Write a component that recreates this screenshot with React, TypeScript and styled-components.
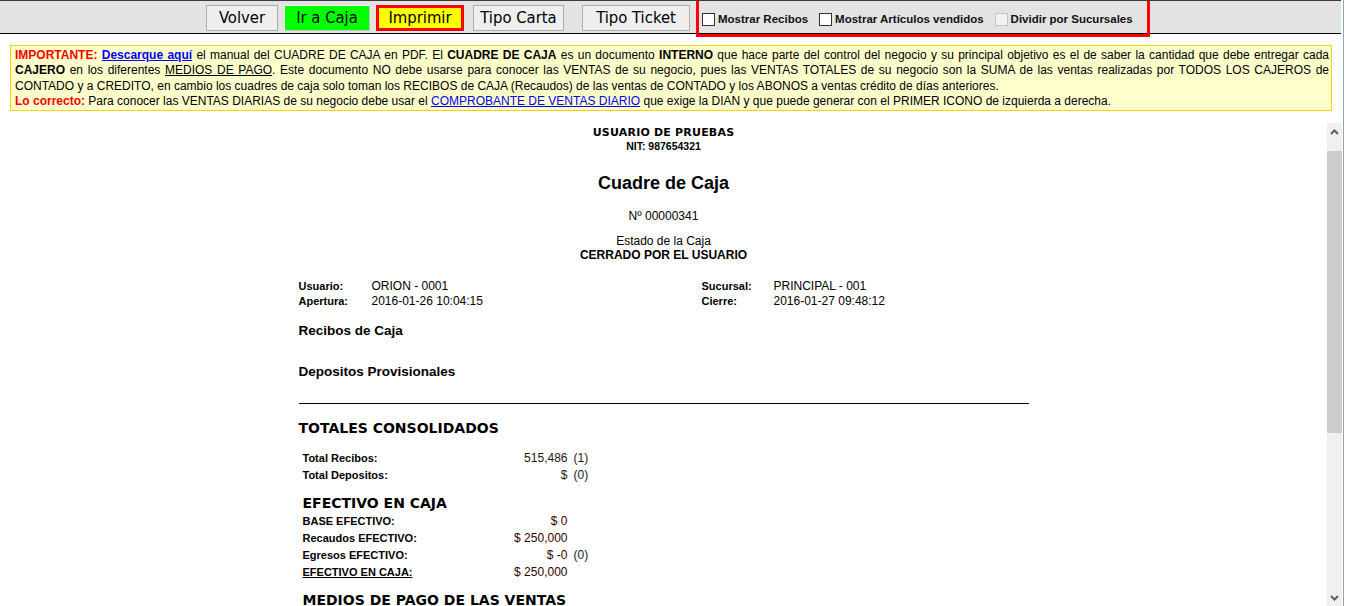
import styled, { createGlobalStyle, css } from 'styled-components';

const GlobalStyle = createGlobalStyle`
  html, body {
    margin: 0;
    padding: 0;
    background: #fff;
    overflow: hidden;
  }
  body {
    font-family: "Liberation Sans", Arial, sans-serif;
    color: #000;
  }
`;

type ButtonKind = 'plain' | 'go' | 'print';

interface Row {
  label: string;
  value: string;
  count?: string;
  money?: boolean;
  underline?: boolean;
}

const buttons: { label: string; kind: ButtonKind; width: number; gap: number }[] = [
  { label: 'Volver', kind: 'plain', width: 72, gap: 0 },
  { label: 'Ir a Caja', kind: 'go', width: 86, gap: 6 },
  { label: 'Imprimir', kind: 'print', width: 88, gap: 6 },
  { label: 'Tipo Carta', kind: 'plain', width: 91, gap: 9 },
  { label: 'Tipo Ticket', kind: 'plain', width: 108, gap: 18 },
];

const totales: Row[] = [
  { label: 'Total Recibos:', value: '515,486', count: '(1)' },
  { label: 'Total Depositos:', value: '$', count: '(0)' },
];

const efectivo: Row[] = [
  { label: 'BASE EFECTIVO:', value: '$ 0', money: true },
  { label: 'Recaudos EFECTIVO:', value: '$ 250,000', money: true },
  { label: 'Egresos EFECTIVO:', value: '$ -0', count: '(0)', money: true },
  { label: 'EFECTIVO EN CAJA:', value: '$ 250,000', money: true, underline: true },
];

const Chevron = ({ down }: { down?: boolean }) => (
  <svg width="9" height="6" viewBox="0 0 9 6">
    <polyline
      points={down ? '1,1 4.5,4.5 8,1' : '1,5 4.5,1.5 8,5'}
      fill="none"
      stroke="#606060"
      strokeWidth="2"
    />
  </svg>
);

export default function App() {
  return (
    <Page>
      <GlobalStyle />
      <Main>
        <Toolbar>
          <ButtonRow>
            {buttons.map((b) => (
              <ToolButton key={b.label} $kind={b.kind} $width={b.width} $gap={b.gap}>
                {b.label}
              </ToolButton>
            ))}
          </ButtonRow>
          <OptionGroup>
            <Option>
              <Check type="checkbox" />
              Mostrar Recibos
            </Option>
            <Option>
              <Check type="checkbox" />
              Mostrar Artículos vendidos
            </Option>
            <Option>
              <Check type="checkbox" disabled />
              Dividir por Sucursales
            </Option>
          </OptionGroup>
        </Toolbar>

        <Notice>
          <Alert>IMPORTANTE:</Alert> <DownloadLink href="#">Descarque aquí</DownloadLink> el manual
          del CUADRE DE CAJA en PDF. El <b>CUADRE DE CAJA</b> es un documento <b>INTERNO</b> que
          hace parte del control del negocio y su principal objetivo es el de saber la cantidad que
          debe entregar cada <b>CAJERO</b> en los diferentes <u>MEDIOS DE PAGO</u>. Este documento
          NO debe usarse para conocer las VENTAS de su negocio, pues las VENTAS TOTALES de su
          negocio son la SUMA de las ventas realizadas por TODOS LOS CAJEROS de CONTADO y a
          CREDITO, en cambio los cuadres de caja solo toman los RECIBOS de CAJA (Recaudos) de las
          ventas de CONTADO y los ABONOS a ventas crédito de días anteriores.
          <br />
          <Alert>Lo correcto:</Alert> Para conocer las VENTAS DIARIAS de su negocio debe usar el{' '}
          <PlainLink href="#">COMPROBANTE DE VENTAS DIARIO</PlainLink> que exige la DIAN y que
          puede generar con el PRIMER ICONO de izquierda a derecha.
        </Notice>

        <Frame>
          <ReportArea>
            <Report>
              <Company>USUARIO DE PRUEBAS</Company>
              <Nit>NIT: 987654321</Nit>
              <Title>Cuadre de Caja</Title>
              <Number>Nº 00000341</Number>
              <State>
                Estado de la Caja
                <br />
                <b>CERRADO POR EL USUARIO</b>
              </State>

              <InfoGrid>
                <InfoLabel>Usuario:</InfoLabel>
                <InfoValue>ORION - 0001</InfoValue>
                <InfoLabel>Sucursal:</InfoLabel>
                <InfoValue>PRINCIPAL - 001</InfoValue>
                <InfoLabel>Apertura:</InfoLabel>
                <InfoValue>2016-01-26 10:04:15</InfoValue>
                <InfoLabel>Cierre:</InfoLabel>
                <InfoValue>2016-01-27 09:48:12</InfoValue>
              </InfoGrid>

              <Section $gap={14}>Recibos de Caja</Section>
              <Section $gap={24}>Depositos Provisionales</Section>
              <Rule />

              <BigHeading $gap={16}>TOTALES CONSOLIDADOS</BigHeading>
              <Amounts $gap={12}>
                {totales.map((r) => (
                  <AmountRow key={r.label} row={r} />
                ))}
              </Amounts>

              <BigHeading $gap={12} $indent>
                EFECTIVO EN CAJA
              </BigHeading>
              <Amounts $gap={0}>
                {efectivo.map((r) => (
                  <AmountRow key={r.label} row={r} />
                ))}
              </Amounts>

              <BigHeading $gap={12} $indent>
                MEDIOS DE PAGO DE LAS VENTAS
              </BigHeading>
            </Report>
          </ReportArea>
          <Scrollbar>
            <ScrollArrow>
              <Chevron />
            </ScrollArrow>
            <Track>
              <Thumb />
            </Track>
            <ScrollArrow>
              <Chevron down />
            </ScrollArrow>
          </Scrollbar>
        </Frame>
      </Main>
    </Page>
  );
}

const AmountRow = ({ row }: { row: Row }) => (
  <>
    <AmountLabel $underline={row.underline}>{row.label}</AmountLabel>
    <AmountValue $money={row.money}>{row.value}</AmountValue>
    <AmountCount>{row.count ?? ''}</AmountCount>
  </>
);

const Page = styled.div`
  display: flex;
  width: 1345px;
  height: 606px;
`;

const Main = styled.div`
  display: flex;
  flex-direction: column;
  width: 1343px;
  height: 100%;
  border-right: 1px solid #8ea4c4;
`;

const Toolbar = styled.div`
  display: flex;
  align-items: flex-start;
  height: 32px;
  margin-right: 2px;
  padding-left: 206px;
  background: #e3e3e3;
  border-top: 1px solid #3a3a3a;
  border-bottom: 1px solid #000;
  flex-shrink: 0;
`;

const ButtonRow = styled.div`
  display: flex;
  margin-top: 4px;
`;

const kinds = {
  plain: css`
    background: #efefef;
    border: 1px solid #adadad;
  `,
  go: css`
    background: #00ff00;
    border: 1px solid;
    border-color: #f6f6f6 #c4c4c4 #c4c4c4 #f6f6f6;
  `,
  print: css`
    background: #ffff00;
    border: 3px solid #ff0000;
  `,
};

const ToolButton = styled.button<{ $kind: ButtonKind; $width: number; $gap: number }>`
  box-sizing: border-box;
  width: ${({ $width }) => $width}px;
  height: 26px;
  margin-left: ${({ $gap }) => $gap}px;
  padding: 0;
  font-family: "DejaVu Sans Condensed", "DejaVu Sans", sans-serif;
  font-size: 16.5px;
  line-height: 1;
  color: #000;
  text-align: center;
  cursor: pointer;
  ${({ $kind }) => kinds[$kind]}
`;

const OptionGroup = styled.div`
  position: relative;
  z-index: 1;
  display: flex;
  align-items: center;
  box-sizing: border-box;
  height: 36px;
  margin-left: 6px;
  padding: 3px 14px 0 3px;
  border: 3px solid #ff0000;
  border-top: none;
`;

const Option = styled.label`
  display: inline-flex;
  align-items: center;
  gap: 3px;
  margin-right: 11px;
  font-size: 11.5px;
  font-weight: bold;
  color: #111;

  &:last-child {
    margin-right: 0;
  }
`;

const Check = styled.input`
  appearance: none;
  width: 13px;
  height: 13px;
  margin: 0;
  background: #fff;
  border: 1px solid #333;

  &:disabled {
    background: #f2f2f2;
    border-color: #c2c2c2;
  }
`;

const Notice = styled.div`
  flex-shrink: 0;
  margin: 11px 11px 0 10px;
  padding: 2px 2px 1px 4px;
  background: #ffffcc;
  border: 1px solid #f3d20e;
  font-size: 12px;
  line-height: 15.33px;
  text-align: justify;
`;

const Alert = styled.b`
  color: #ff0000;
`;

const DownloadLink = styled.a`
  color: #0000ff;
  font-weight: bold;
  text-decoration: underline;
`;

const PlainLink = styled.a`
  color: #0000ee;
  text-decoration: underline;
`;

const Frame = styled.div`
  display: flex;
  flex: 1;
  min-height: 0;
  margin-top: 12px;
`;

const ReportArea = styled.div`
  flex: 1;
  overflow: hidden;
  display: flex;
  justify-content: center;
`;

const Report = styled.div`
  width: 730px;
  padding-top: 3px;
`;

const Company = styled.div`
  font-family: "DejaVu Sans", Verdana, sans-serif;
  font-weight: bold;
  font-size: 11px;
  letter-spacing: 0.2px;
  line-height: 13px;
  text-align: center;
`;

const Nit = styled.div`
  font-weight: bold;
  font-size: 10.5px;
  line-height: 14px;
  text-align: center;
`;

const Title = styled.div`
  margin-top: 20px;
  font-weight: bold;
  font-size: 18px;
  line-height: 21px;
  text-align: center;
`;

const Number = styled.div`
  margin-top: 15px;
  font-size: 12px;
  line-height: 14px;
  text-align: center;
`;

const State = styled.div`
  margin-top: 11px;
  font-size: 12px;
  line-height: 14px;
  text-align: center;
`;

const InfoGrid = styled.div`
  display: grid;
  grid-template-columns: 73px 330px 72px 1fr;
  grid-auto-rows: 15px;
  align-items: center;
  margin-top: 16px;
`;

const InfoLabel = styled.div`
  font-size: 11px;
  font-weight: bold;
`;

const InfoValue = styled.div`
  font-size: 12px;
`;

const Section = styled.div<{ $gap: number }>`
  margin-top: ${({ $gap }) => $gap}px;
  font-size: 13.5px;
  font-weight: bold;
  line-height: 17px;
`;

const Rule = styled.div`
  margin-top: 23px;
  height: 1px;
  background: #000;
`;

const BigHeading = styled.div<{ $gap: number; $indent?: boolean }>`
  margin-top: ${({ $gap }) => $gap}px;
  padding-left: ${({ $indent }) => ($indent ? 4 : 0)}px;
  font-family: "DejaVu Sans", Verdana, sans-serif;
  font-weight: bold;
  font-size: 14px;
  line-height: 17px;
  white-space: nowrap;
`;

const Amounts = styled.div<{ $gap: number }>`
  display: grid;
  grid-template-columns: 174px 85px auto;
  grid-auto-rows: 17px;
  align-items: center;
  column-gap: 6px;
  justify-content: start;
  margin-top: ${({ $gap }) => $gap}px;
  padding-left: 4px;
`;

const AmountLabel = styled.div<{ $underline?: boolean }>`
  font-size: 11px;
  font-weight: bold;
  text-decoration: ${({ $underline }) => ($underline ? 'underline' : 'none')};
`;

const AmountValue = styled.div<{ $money?: boolean }>`
  font-size: 12px;
  text-align: right;
  color: ${({ $money }) => ($money ? '#330000' : '#1a1a1a')};
`;

const AmountCount = styled.div`
  font-size: 12px;
  color: #1a1a1a;
`;

const Scrollbar = styled.div`
  display: flex;
  flex-direction: column;
  width: 15px;
  margin-right: 1px;
  background: #f0f0f0;
`;

const ScrollArrow = styled.div`
  display: flex;
  align-items: center;
  justify-content: center;
  height: 17px;
  flex-shrink: 0;
`;

const Track = styled.div`
  flex: 1;
  padding-top: 11px;
`;

const Thumb = styled.div`
  height: 282px;
  background: #cdcdcd;
`;
